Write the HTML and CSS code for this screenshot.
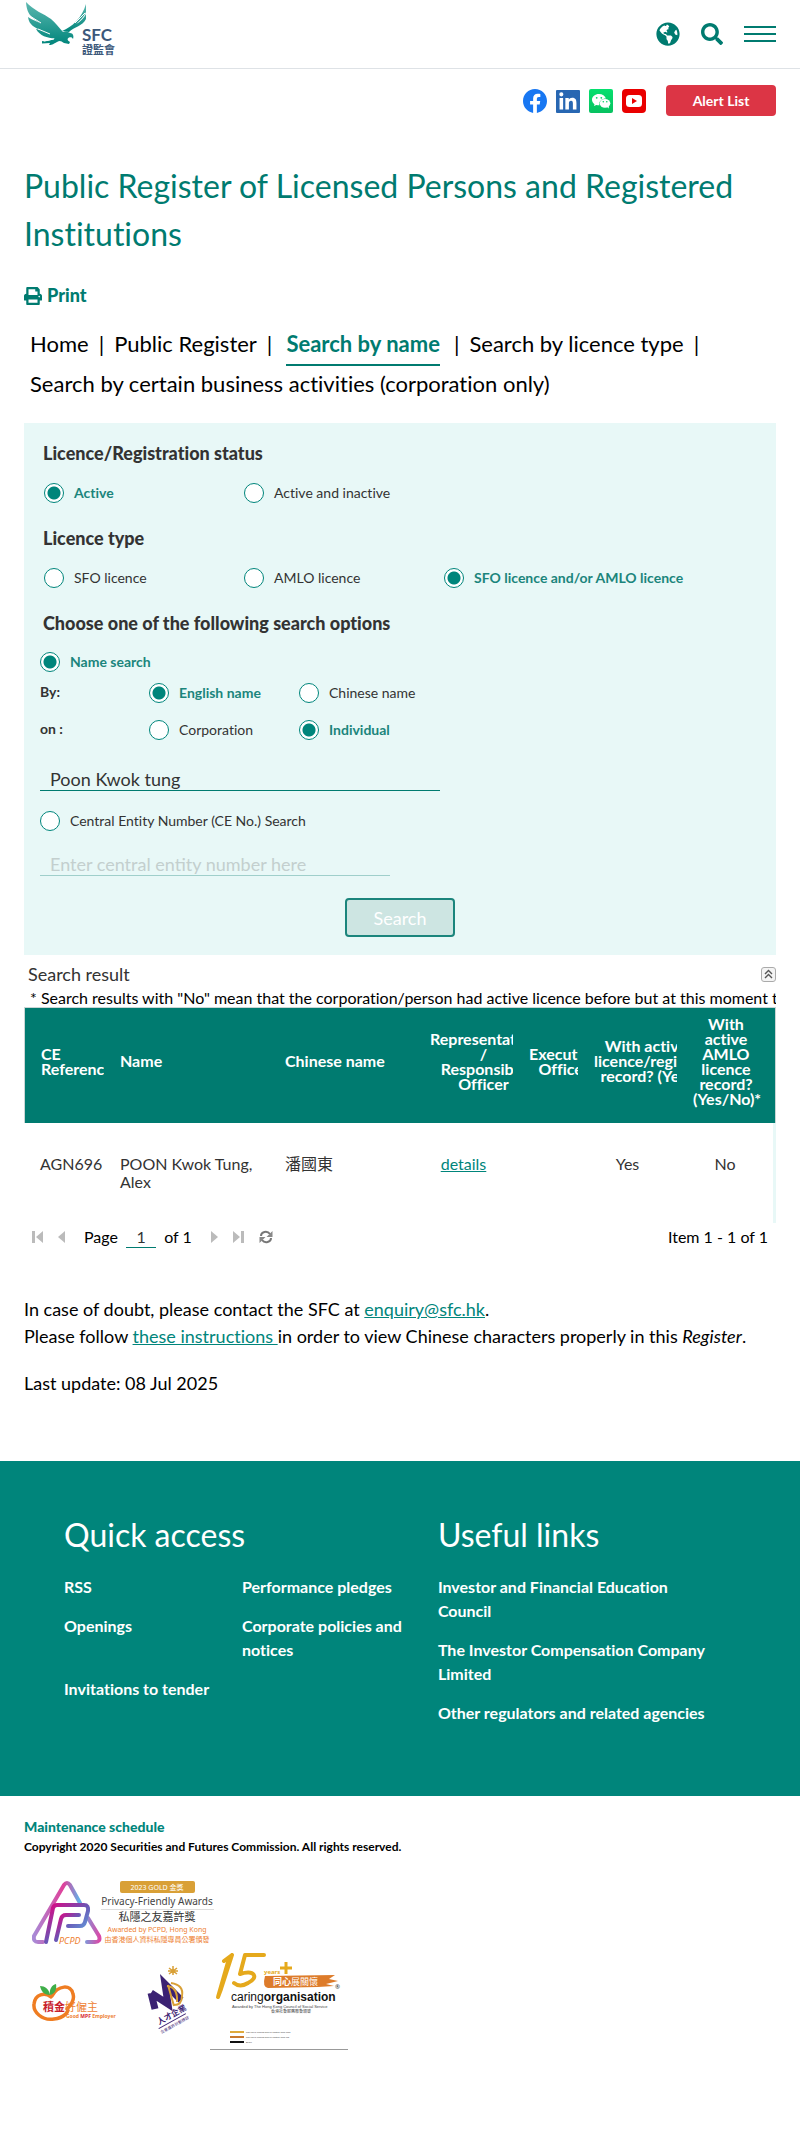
FILE: index.html
```html
<!DOCTYPE html>
<html lang="en">
<head>
<meta charset="utf-8">
<meta name="viewport" content="width=device-width, initial-scale=1">
<title>Public Register of Licensed Persons and Registered Institutions</title>
<link rel="stylesheet" href="styles.css">
</head>
<body>
<header class="site-header">
  <a class="brand" href="#" aria-label="SFC">
    <svg width="92" height="58" viewBox="24 0 92 58">
      <defs>
        <linearGradient id="wing" x1="0" y1="0" x2="0" y2="1">
          <stop offset="0" stop-color="#5cb8b0"/>
          <stop offset="1" stop-color="#00857b"/>
        </linearGradient>
      </defs>
      <g fill="url(#wing)">
        <path d="M26 2C33 10 44 14 51 19C56 23 59 28 63 32C65 31 68 31.500 70 33C73 33 74 36 73 39C72 37 71 37 69 37.500C67 39 67 40 70 42L69 44L64 43C61 41 60 40 57 42C53 44 53 45 49 45L50 43L42 43.500L42 41C47 42 51 40 55 38.500C47 38 40 36 36 29L41 30C35 28 29 25 28 17C32 20 37 21 41 24C34 18 27 17 26 2Z"/>
        <path d="M62 31C72 27 82 18 86 4L86 12C84 17 80 20 76 24C80 22 84 18 86 14L86 19C83 26 74 27 69 32Z"/>
      </g>
      <path d="M41 23L30 16M50 34L38 29M54 39L44 41M75 23L85 13" stroke="#fff" stroke-width="1" fill="none"/>
      <text x="82" y="41" class="logo-latin">SFC</text>
      <text x="82" y="54" class="logo-han">證監會</text>
    </svg>
  </a>
  <div class="header-tools">
    <button class="icon-button" type="button" aria-label="Language">
      <svg width="24" height="24" viewBox="0 0 496 512"><path fill="#007b70" d="M248 8C111.030 8 0 119.030 0 256s111.030 248 248 248 248-111.030 248-248S384.970 8 248 8zm82.290 357.600c-3.900 3.880-7.990 7.950-11.310 11.280-2.990 3-5.100 6.700-6.170 10.710-1.510 5.660-2.730 11.380-4.770 16.870l-17.390 46.850c-13.760 3-28 4.690-42.650 4.690v-27.380c1.690-12.620-7.640-36.260-22.630-51.250-6-6-9.370-14.140-9.370-22.630v-32.010c0-11.640-6.270-22.340-16.460-27.970-14.370-7.950-34.810-19.060-48.810-26.110-11.480-5.780-22.100-13.140-31.650-21.750l-.8-.72a114.792 114.792 0 0 1-18.060-20.740c-9.380-13.770-24.660-36.420-34.590-51.140 20.470-45.500 57.360-82.040 103.200-101.890l24.010 12.010C203.480 89.740 216 82.010 216 70.110v-11.300c7.990-1.290 16.120-2.110 24.390-2.420l28.300 28.300c6.250 6.250 6.250 16.380 0 22.630L264 112l-10.340 10.340c-3.120 3.120-3.120 8.190 0 11.310l4.690 4.690c3.120 3.120 3.120 8.190 0 11.310l-8 8a8.008 8.008 0 0 1-5.660 2.340h-8.990c-2.080 0-4.080.81-5.580 2.270l-9.920 9.650a8.008 8.008 0 0 0-1.580 9.310l15.590 31.190c2.660 5.320-1.210 11.580-7.150 11.580h-5.640c-1.930 0-3.790-.7-5.240-1.960l-9.280-8.060a16.017 16.017 0 0 0-15.550-3.100l-31.170 10.390a11.950 11.950 0 0 0-8.170 11.340c0 4.530 2.560 8.660 6.610 10.690l11.080 5.540c9.410 4.710 19.790 7.160 30.310 7.160s22.590 27.290 32 32h66.750c8.490 0 16.620 3.370 22.630 9.370l13.690 13.690a30.503 30.503 0 0 1 8.930 21.570 46.536 46.536 0 0 1-13.720 32.980zM417 274.250c-5.790-1.450-10.840-5-14.150-9.970l-17.980-26.970a23.970 23.970 0 0 1 0-26.620l19.590-29.380c2.320-3.470 5.500-6.290 9.240-8.150l12.980-6.490C440.200 193.590 448 223.870 448 256c0 8.670-.74 17.160-1.820 25.540L417 274.250z"/></svg>
    </button>
    <button class="icon-button" type="button" aria-label="Search site">
      <svg width="22" height="22" viewBox="0 0 512 512"><path fill="#007b70" d="M505 442.700L405.300 343c-4.500-4.500-10.600-7-17-7H372c27.600-35.300 44-79.700 44-128C416 93.100 322.900 0 208 0S0 93.100 0 208s93.100 208 208 208c48.300 0 92.700-16.400 128-44v16.300c0 6.400 2.500 12.500 7 17l99.700 99.700c9.400 9.400 24.600 9.400 33.900 0l28.300-28.300c9.400-9.400 9.400-24.600.1-34zM208 336c-70.700 0-128-57.200-128-128 0-70.700 57.200-128 128-128 70.700 0 128 57.200 128 128 0 70.700-57.200 128-128 128z"/></svg>
    </button>
    <button class="icon-button" type="button" aria-label="Menu">
      <svg width="32" height="16" viewBox="0 0 32 16"><path fill="#007b70" d="M0 0h32v2H0zM0 7h32v2H0zM0 14h32v2H0z"/></svg>
    </button>
  </div>
</header>

<div class="social-bar">
  <a class="icon-link" href="#" aria-label="Facebook">
    <svg width="24" height="24" viewBox="0 0 24 24"><circle cx="12" cy="12" r="11" fill="#fff"/><path fill="#1877f2" d="M24 12.073c0-6.627-5.373-12-12-12s-12 5.373-12 12c0 5.990 4.388 10.954 10.125 11.854v-8.385H7.078v-3.470h3.047V9.430c0-3.007 1.792-4.669 4.533-4.669 1.312 0 2.686.235 2.686.235v2.953H15.830c-1.491 0-1.956.925-1.956 1.874v2.250h3.328l-.532 3.470h-2.796v8.385C19.612 23.027 24 18.062 24 12.073z"/></svg>
  </a>
  <a class="icon-link" href="#" aria-label="LinkedIn">
    <svg width="24" height="24" viewBox="0 0 24 24"><rect y="1" width="24" height="23" rx="1" fill="#2867b2"/><path fill="#fff" d="M20.447 20.452h-3.554v-5.569c0-1.328-.027-3.037-1.852-3.037-1.853 0-2.136 1.445-2.136 2.939v5.667H9.351V9h3.414v1.561h.046c.477-.9 1.637-1.850 3.370-1.850 3.601 0 4.267 2.370 4.267 5.455v6.286zM5.337 7.433a2.062 2.062 0 0 1-2.063-2.065 2.064 2.064 0 1 1 2.063 2.065zm1.782 13.019H3.555V9h3.564v11.452z"/></svg>
  </a>
  <a class="icon-link" href="#" aria-label="WeChat">
    <svg width="24" height="24" viewBox="0 0 24 24"><defs><linearGradient id="wc" x1="0" y1="0" x2="0" y2="1"><stop offset="0" stop-color="#05e06e"/><stop offset="1" stop-color="#07c160"/></linearGradient></defs><rect width="24" height="24" rx="2" fill="url(#wc)"/><path fill="#fff" d="M10 5c-4 0-7 2.500-7 5.700 0 1.800 1 3.400 2.500 4.500L5 17l2.300-1.100c.9.300 2 .4 3.200.4A5.500 5.500 0 0 1 10.300 15c0-3.200 3-5.600 6.600-5.500C16.200 6.800 13.400 5 10 5z"/><ellipse cx="16" cy="14.300" rx="5.300" ry="4.400" fill="#fff"/><path d="M18 18l2 1.500-.5-2.500z" fill="#fff"/><g fill="#07d066"><circle cx="7.700" cy="8.800" r=".9"/><circle cx="12.300" cy="8.800" r=".9"/><circle cx="14.300" cy="12.800" r=".8"/><circle cx="17.800" cy="12.800" r=".8"/></g></svg>
  </a>
  <a class="icon-link" href="#" aria-label="YouTube">
    <svg width="24" height="24" viewBox="0 0 24 24"><rect width="24" height="24" rx="4" fill="#ea0000"/><rect x="4" y="6" width="16" height="12" rx="3.500" fill="#fff"/><path d="M10 9l5 3-5 3z" fill="#ea0000"/></svg>
  </a>
  <a class="alert-link" href="#">Alert List</a>
</div>

<main class="content">
  <h1 class="page-title">Public Register of Licensed Persons and Registered Institutions</h1>
  <a class="print-link" href="#">
    <svg width="18" height="18" viewBox="0 0 512 512"><path fill="#007b70" d="M448 192V77.250c0-8.490-3.370-16.620-9.370-22.630L393.370 9.370c-6-6-14.140-9.370-22.630-9.370H96C78.330 0 64 14.330 64 32v160c-35.350 0-64 28.650-64 64v112c0 8.840 7.160 16 16 16h48v96c0 17.670 14.330 32 32 32h320c17.670 0 32-14.330 32-32v-96h48c8.840 0 16-7.160 16-16V256c0-35.350-28.650-64-64-64zm-64 256H128v-96h256v96zm0-224H128V64h192v48c0 8.840 7.160 16 16 16h48v96zm48 72c-13.250 0-24-10.750-24-24 0-13.260 10.750-24 24-24s24 10.740 24 24c0 13.250-10.750 24-24 24z"/></svg>
    Print
  </a>
  <nav class="tabs" aria-label="Register">
    <a href="#">Home</a><span>|</span>
    <a href="#">Public Register</a><span>|</span>
    <a class="current" href="#">Search by name</a><span>|</span>
    <a href="#">Search by licence type</a><span>|</span>
    <a href="#">Search by certain business activities (corporation only)</a>
  </nav>

  <form class="search-form">
    <h2 class="form-heading">Licence/Registration status</h2>
    <div class="choices">
      <label class="choice"><input type="radio" name="status" checked><span>Active</span></label>
      <label class="choice"><input type="radio" name="status"><span>Active and inactive</span></label>
    </div>
    <h2 class="form-heading">Licence type</h2>
    <div class="choices">
      <label class="choice"><input type="radio" name="type"><span>SFO licence</span></label>
      <label class="choice"><input type="radio" name="type"><span>AMLO licence</span></label>
      <label class="choice"><input type="radio" name="type" checked><span>SFO licence and/or AMLO licence</span></label>
    </div>
    <h2 class="form-heading">Choose one of the following search options</h2>
    <div class="options">
      <label class="choice"><input type="radio" name="mode" checked><span>Name search</span></label>
      <div class="option-rows">
        <strong class="row-name">By:</strong>
        <label class="choice"><input type="radio" name="by" checked><span>English name</span></label>
        <label class="choice"><input type="radio" name="by"><span>Chinese name</span></label>
        <strong class="row-name">on :</strong>
        <label class="choice"><input type="radio" name="on"><span>Corporation</span></label>
        <label class="choice"><input type="radio" name="on" checked><span>Individual</span></label>
      </div>
      <input class="field" type="text" value="Poon Kwok tung" aria-label="Name">
      <label class="choice"><input type="radio" name="mode"><span>Central Entity Number (CE No.) Search</span></label>
      <input class="field field-ce" type="text" placeholder="Enter central entity number here" aria-label="Central entity number" disabled>
      <button class="search-button" type="button" disabled>Search</button>
    </div>
  </form>

  <section class="results">
    <div class="results-bar">
      <h2 class="results-title">Search result</h2>
      <button class="icon-button" type="button" aria-label="Collapse">
        <svg width="15" height="15" viewBox="0 0 15 15"><rect x=".5" y=".5" width="14" height="14" rx="2.500" fill="#f4f4f4" stroke="#aaa"/><path d="M4 7l3.500-3.500L11 7M4 11l3.500-3.500L11 11" fill="none" stroke="#555" stroke-width="1.400"/></svg>
      </button>
    </div>
    <p class="results-note">* Search results with "No" mean that the corporation/person had active licence before but at this moment the licence is not active</p>
    <table class="grid">
      <colgroup>
        <col class="w-ref"><col><col class="w-han"><col class="w-mid"><col class="w-exec"><col class="w-mid"><col class="w-mid">
      </colgroup>
      <thead>
        <tr>
          <th>CE Reference</th>
          <th>Name</th>
          <th>Chinese name</th>
          <th><div class="overflowing">Representative<br>/<br>Responsible<br>Officer</div></th>
          <th><div class="overflowing">Executive<br>Officer</div></th>
          <th><div class="overflowing">With active SFO<br>licence/registration<br>record? (Yes/No)*</div></th>
          <th class="center">With active AMLO licence record? (Yes/No)*</th>
        </tr>
      </thead>
      <tbody>
        <tr>
          <td>AGN696</td>
          <td>POON Kwok Tung, Alex</td>
          <td>潘國東</td>
          <td class="center"><a href="#">details</a></td>
          <td></td>
          <td class="center">Yes</td>
          <td class="center">No</td>
        </tr>
      </tbody>
    </table>
    <div class="pager">
      <button class="icon-button" type="button" aria-label="First page"><svg width="11" height="12" viewBox="0 0 11 12"><path fill="#bbb" d="M0 0h3v12H0zM11 0v12L4 6z"/></svg></button>
      <button class="icon-button" type="button" aria-label="Previous page"><svg width="7" height="12" viewBox="0 0 7 12"><path fill="#bbb" d="M7 0v12L0 6z"/></svg></button>
      <label class="page-label">Page <input class="page-input" type="text" value="1"> of 1</label>
      <button class="icon-button" type="button" aria-label="Next page"><svg width="7" height="12" viewBox="0 0 7 12"><path fill="#bbb" d="M0 0v12l7-6z"/></svg></button>
      <button class="icon-button" type="button" aria-label="Last page"><svg width="11" height="12" viewBox="0 0 11 12"><path fill="#bbb" d="M0 0v12l7-6zM8 0h3v12H8z"/></svg></button>
      <button class="icon-button" type="button" aria-label="Refresh"><svg width="14" height="14" viewBox="0 0 14 14"><path d="M2 6c0-4 6-6 9-2M12 8c0 4-6 6-9 2" fill="none" stroke="#777" stroke-width="2"/><path d="M13.500 1v6H7.500zM.5 13V7h6z" fill="#888"/></svg></button>
      <span class="page-count">Item 1 - 1 of 1</span>
    </div>
  </section>

  <section class="notes">
    <p>In case of doubt, please contact the SFC at <a href="#">enquiry@sfc.hk</a>.<br>Please follow <a href="#">these instructions </a>in order to view Chinese characters properly in this <em>Register</em>.</p>
    <p>Last update: 08 Jul 2025</p>
  </section>
</main>

<footer>
  <div class="footer-main">
    <section>
      <h2 class="footer-title">Quick access</h2>
      <div class="footer-links two">
        <a href="#">RSS</a><a href="#">Performance pledges</a>
        <a href="#">Openings</a><a href="#">Corporate policies and notices</a>
        <a href="#">Invitations to tender</a>
      </div>
    </section>
    <section>
      <h2 class="footer-title">Useful links</h2>
      <div class="footer-links">
        <a href="#">Investor and Financial Education Council</a>
        <a href="#">The Investor Compensation Company Limited</a>
        <a href="#">Other regulators and related agencies</a>
      </div>
    </section>
  </div>
  <div class="footer-base">
    <a class="maintenance" href="#">Maintenance schedule</a>
    <p class="copyright">Copyright 2020 Securities and Futures Commission. All rights reserved.</p>
    <div class="awards">
      <svg class="award-wide" width="186" height="68" viewBox="0 0 186 68">
        <defs>
          <linearGradient id="pc" x1="0" y1="0" x2="1" y2="0"><stop offset="0" stop-color="#a98ad6"/><stop offset=".45" stop-color="#e0409a"/><stop offset=".7" stop-color="#5fb4ea"/><stop offset="1" stop-color="#d94aa8"/></linearGradient>
          <linearGradient id="pi" x1="0" y1="0" x2="1" y2="1"><stop offset="0" stop-color="#e4007f"/><stop offset=".5" stop-color="#6a55b5"/><stop offset="1" stop-color="#5ec3ef"/></linearGradient>
        </defs>
        <g fill="none" stroke-linejoin="round" stroke-linecap="round">
          <path d="M48 23L38 5Q35 1 32 5L2 56Q1 62 6 62H11M56 38L67 56Q69 62 63 62H55" stroke="url(#pc)" stroke-width="4"/>
          <path d="M14 62L21 28Q22 25 25 25H52Q57 25 56 31L53 42Q52 46 48 46H36" stroke="url(#pi)" stroke-width="4"/>
          <path d="M24 60L29 39Q30 35 34 35H47" stroke="url(#pi)" stroke-width="4"/>
        </g>
        <text class="pcpd" x="27" y="64">PCPD</text>
        <rect x="88" y="1" width="75" height="12" rx="2" fill="#d9a036"/>
        <text class="aw-gold" x="125" y="10">2023 GOLD 金獎</text>
        <text class="aw-name" x="125" y="25">Privacy-Friendly Awards</text>
        <path d="M69 29.500h113" stroke="#ddd"/>
        <text class="aw-han" x="125" y="41">私隱之友嘉許獎</text>
        <text class="aw-by" x="125" y="52">Awarded by PCPD, Hong Kong</text>
        <text class="aw-by" x="125" y="62">由香港個人資料私隱專員公署頒發</text>
      </svg>
      <div class="award-row">
        <svg width="86" height="40" viewBox="0 0 86 40">
          <path d="M19 13C13 8 3 10 2 20C1 28 10 37 22 35C32 34 38 27 35 25M20 12C26 1 39 0 41 10C43 16 39 21 35 25" fill="none" stroke="#ef7d22" stroke-width="3.500" stroke-linecap="round"/>
          <path d="M18 11C12 11 9 7 8 2C13 2 17 5 18 11C17 5 20 1 24 0C25 5 23 10 18 11Z" fill="#3fae49"/>
          <text class="mpf-red" x="11" y="27">積金</text>
          <text class="mpf-orange" x="33" y="27">好僱主</text>
          <text class="mpf-small" x="34" y="34">Good <tspan fill="#d7282f">MPF</tspan> Employer</text>
        </svg>
        <svg width="42" height="72" viewBox="0 0 42 72">
          <path d="M26 1v9M22 3l8 6M30 3l-8 6M21 6h10" stroke="#d9a036" stroke-width="1.500"/>
          <g fill="none"><path d="M8 44L4 28M4 28L21 39L18 19L34 35" stroke="#3b2273" stroke-width="7"/><path d="M21 20L27 41M24 18Q37 20 35 31Q35 40 27 40M20 21Q31 22 30 37" stroke="#d9a036" stroke-width="2"/></g>
          <g transform="translate(12 60) rotate(-29)"><text class="talent" x="0" y="0">人才企業</text><path d="M-2 3h31" stroke="#3b2273" stroke-width="1"/><text class="talent-small" x="-2" y="9">企業嘉許計劃標誌</text></g>
        </svg>
        <svg width="138" height="102" viewBox="0 0 138 102">
          <path d="M22 5L18 12L8 47L11 39L22 5L14 11M54 5H35L30 24C45 19 49 28 38 33Q30 38 24 33" fill="none" stroke="#e5a91c" stroke-width="4" stroke-linecap="round" stroke-linejoin="round"/>
          <text class="care-years" x="54" y="24">years</text>
          <path d="M76 12v12M70 18h12" stroke="#e5a91c" stroke-width="3"/>
          <path d="M55 26L125 25L119 29L128 31L116 34L124 36L108 37L58 38Q52 37 55 26Z" fill="#dd7b2a"/>
          <text class="care-han" x="63" y="35"><tspan font-weight="700">同心</tspan>展關懷</text>
          <text class="care-reg" x="125" y="39">®</text>
          <text class="care-name" x="21" y="51">caring<tspan font-weight="700">organisation</tspan></text>
          <text class="care-tiny" x="22" y="58">Awarded by The Hong Kong Council of Social Service</text>
          <text class="care-tiny" x="61" y="63">香港社會服務聯會頒發</text>
          <path d="M20 82h14" stroke="#dfaa3c" stroke-width="2"/><path d="M20 87h14" stroke="#c9792d" stroke-width="2"/><path d="M20 92h14" stroke="#111" stroke-width="2"/>
          <text class="care-key" x="36" y="83">M30Y100 &amp; Process Color or Pantone Color 1375</text>
          <text class="care-key" x="36" y="88">M60Y100 &amp; Process Color or Pantone Color 718</text>
          <text class="care-key" x="36" y="93">BL100</text>
          <path d="M0 99.500h138" stroke="#999"/>
        </svg>
      </div>
    </div>
  </div>
</footer>
</body>
</html>
```
FILE: styles.css
```css
* { box-sizing: border-box; }
body {
  margin: 0;
  font-family: Lato, "Noto Sans CJK TC", sans-serif;
  font-size: 16px;
  font-variant-ligatures: none;
  line-height: 24px;
  color: #000;
  background: #fff;
}
h1, h2, p { margin: 0; }
svg { display: block; }
a { color: #00857b; }
.icon-button { padding: 0; border: 0; background: none; cursor: pointer; }

.site-header {
  display: flex;
  justify-content: space-between;
  align-items: flex-start;
  height: 69px;
  padding: 0 24px;
  border-bottom: 1px solid #dee2e6;
}
.header-tools { display: flex; align-items: center; gap: 21px; height: 68px; }
.logo-latin { font: 700 17px Lato, sans-serif; fill: #3c587a; }
.logo-han { font: 700 11px "Noto Sans CJK TC", sans-serif; fill: #3c587a; }

.social-bar {
  display: flex;
  justify-content: flex-end;
  align-items: center;
  gap: 9px;
  padding: 16px 24px;
}
.alert-link {
  width: 110px;
  margin-left: 11px;
  border-radius: 4px;
  background: #dc3545;
  color: #fff;
  font-size: 14px;
  font-weight: 700;
  line-height: 31px;
  text-align: center;
  text-decoration: none;
}

.content { padding: 30px 24px 64px; }
.page-title { font-size: 32px; font-weight: 400; line-height: 48px; color: #007b70; }
.print-link {
  display: flex;
  align-items: center;
  gap: 5px;
  margin-top: 24px;
  font-size: 18px;
  font-weight: 900;
  line-height: 27px;
  color: #007b70;
  text-decoration: none;
}
.tabs {
  display: flex;
  flex-wrap: wrap;
  gap: 0 10px;
  margin-top: 15px;
  padding: 0 6px;
  font-size: 22px;
  line-height: 40px;
}
.tabs a { color: #000; text-decoration: none; }
.tabs .current {
  height: 42px;
  margin: 0 4px -2px;
  border-bottom: 2px solid #007b70;
  color: #007b70;
  font-weight: 700;
}

.search-form { margin-top: 19px; padding: 17px 16px 18px; background: #e8f8f7; color: #333; }
.form-heading { padding-left: 3px; font-size: 18px; font-weight: 900; line-height: 27px; }
.choices {
  display: grid;
  grid-template-columns: 200px 200px 1fr;
  margin: 16px 0 22px;
  padding-left: 4px;
}
.choice { display: flex; align-items: center; gap: 10px; font-size: 14px; line-height: 20px; }
.choice input {
  appearance: none;
  flex: none;
  width: 20px;
  height: 20px;
  margin: 0;
  border: 1px solid #00857b;
  border-radius: 50%;
  background: #fff;
}
.choice input:checked { background: radial-gradient(circle, #00857b 6px, #fff 7px); }
.choice input:checked + span { color: #1b857c; font-weight: 700; }
.options { display: flex; flex-direction: column; padding-top: 15px; }
.option-rows {
  display: grid;
  grid-template-columns: 109px 150px 1fr;
  gap: 17px 0;
  margin: 11px 0 20px;
}
.row-name { font-size: 14px; line-height: 17px; }
.field {
  width: 400px;
  max-width: 100%;
  height: 31px;
  margin-bottom: 20px;
  padding: 8px 10px 0;
  border: 0;
  border-bottom: 1px solid #007b70;
  background: transparent;
  color: #333;
  font: 18px Lato, sans-serif;
}
.field-ce { width: 350px; margin: 14px 0 22px; border-color: #9fcfcb; }
.field::placeholder { color: #c3cfce; opacity: 1; }
.search-button {
  align-self: center;
  width: 110px;
  height: 39px;
  border: 2px solid #1b857c;
  border-radius: 4px;
  background: #cde5e2;
  color: #fff;
  font: 18px Lato, sans-serif;
}

.results-bar { display: flex; justify-content: space-between; align-items: center; padding-left: 4px; margin-top: 6px; }
.results-title { font-size: 18px; font-weight: 400; line-height: 27px; color: #333; }
.results-note { padding-left: 6px; overflow: hidden; line-height: 19px; white-space: nowrap; }
.results-note, .grid, .pager { font-size: 16px; }
.grid {
  width: 100%;
  table-layout: fixed;
  border-collapse: separate;
  border-spacing: 0;
  color: #333;
}
.w-ref { width: 80px; }
.w-han { width: 145px; }
.w-mid { width: 99px; }
.w-exec { width: 65px; }
.grid th {
  height: 116px;
  padding: 0 0 10px 16px;
  overflow: hidden;
  border-top: 1px solid #c9d6d5;
  background: #007b70;
  color: #fff;
  line-height: 15px;
  text-align: left;
}
.grid th:first-child { border-left: 1px solid #c9d6d5; }
.grid th:last-child { border-right: 1px solid #c9d6d5; }
.grid th.center { padding: 0 16px 10px; text-align: center; }
.overflowing { width: max-content; text-align: center; white-space: nowrap; }
.grid td { height: 100px; padding: 32px 0 0 16px; line-height: 18px; vertical-align: top; }
.grid td.center { padding-left: 0; text-align: center; }
.grid td:last-child { border-right: 3px solid #e8f8f7; }
.pager { display: flex; align-items: center; gap: 15px; padding: 2px 8px 1px; }
.page-label { padding: 0 4px; }
.page-input {
  width: 30px;
  height: 22px;
  margin: 0 4px;
  padding: 0;
  border: 0;
  border-bottom: 1px solid #007b70;
  color: #333;
  font: 16px Lato, sans-serif;
  text-align: center;
}
.page-count { margin-left: auto; }

.notes { margin-top: 46px; font-size: 18px; line-height: 27px; }
.notes p + p { margin-top: 20px; }

.footer-main {
  display: grid;
  grid-template-columns: 57% 1fr;
  padding: 50px 80px 56px 64px;
  background: #00857b;
  color: #fff;
}
.footer-title { font-size: 32px; font-weight: 400; line-height: 48px; }
.footer-links { display: grid; margin-top: 16px; padding-bottom: 15px; gap: 15px 0; }
.two { grid-template-columns: 178px 1fr; padding-right: 24px; align-content: start; }
.footer-links a { color: #fff; font-weight: 700; text-decoration: none; }
.footer-base { padding: 18px 24px 80px; }
.maintenance { font-size: 14px; font-weight: 900; line-height: 21px; text-decoration: none; }
.copyright { font-size: 12px; font-weight: 700; line-height: 18px; }
.awards { padding: 24px 0 0 8px; }
.award-row { display: flex; align-items: flex-start; padding-top: 2px; }
.award-row svg:nth-child(1) { margin-top: 34px; }
.award-row svg:nth-child(2) { margin: 15px 21px 0 29px; }

.awards text { font-family: "Noto Sans", "Noto Sans CJK TC", sans-serif; }
.awards .aw-gold { font-size: 7px; fill: #fff; text-anchor: middle; }
.awards .aw-name { font-size: 10px; fill: #444; text-anchor: middle; }
.awards .aw-han { font-size: 11px; fill: #333; text-anchor: middle; }
.awards .aw-by { font-size: 7px; fill: #ee8133; text-anchor: middle; }
.awards .pcpd { font-size: 9px; font-style: italic; fill: #ee8133; }
.awards .mpf-red { font-size: 11px; font-weight: 700; fill: #c8202b; }
.awards .mpf-orange { font-size: 11px; fill: #ee8133; }
.awards .mpf-small { font-size: 5px; font-weight: 700; fill: #ee8133; }
.awards .talent { font-size: 8px; font-weight: 700; fill: #3b2273; }
.awards .talent-small { font-size: 4px; fill: #3b2273; }
.awards .care-years { font-size: 6px; font-weight: 700; fill: #e5a91c; }
.awards .care-han { font-size: 9px; fill: #fff; }
.awards .care-reg { font-size: 6px; fill: #333; }
.awards .care-name { font-family: "Liberation Sans", Arial, sans-serif; font-size: 12px; fill: #111; }
.awards .care-tiny { font-family: "Liberation Sans", "Noto Sans CJK TC", sans-serif; font-size: 4px; fill: #444; }
.awards .care-key { font-family: "Liberation Sans", Arial, sans-serif; font-size: 2px; fill: #333; }
```
